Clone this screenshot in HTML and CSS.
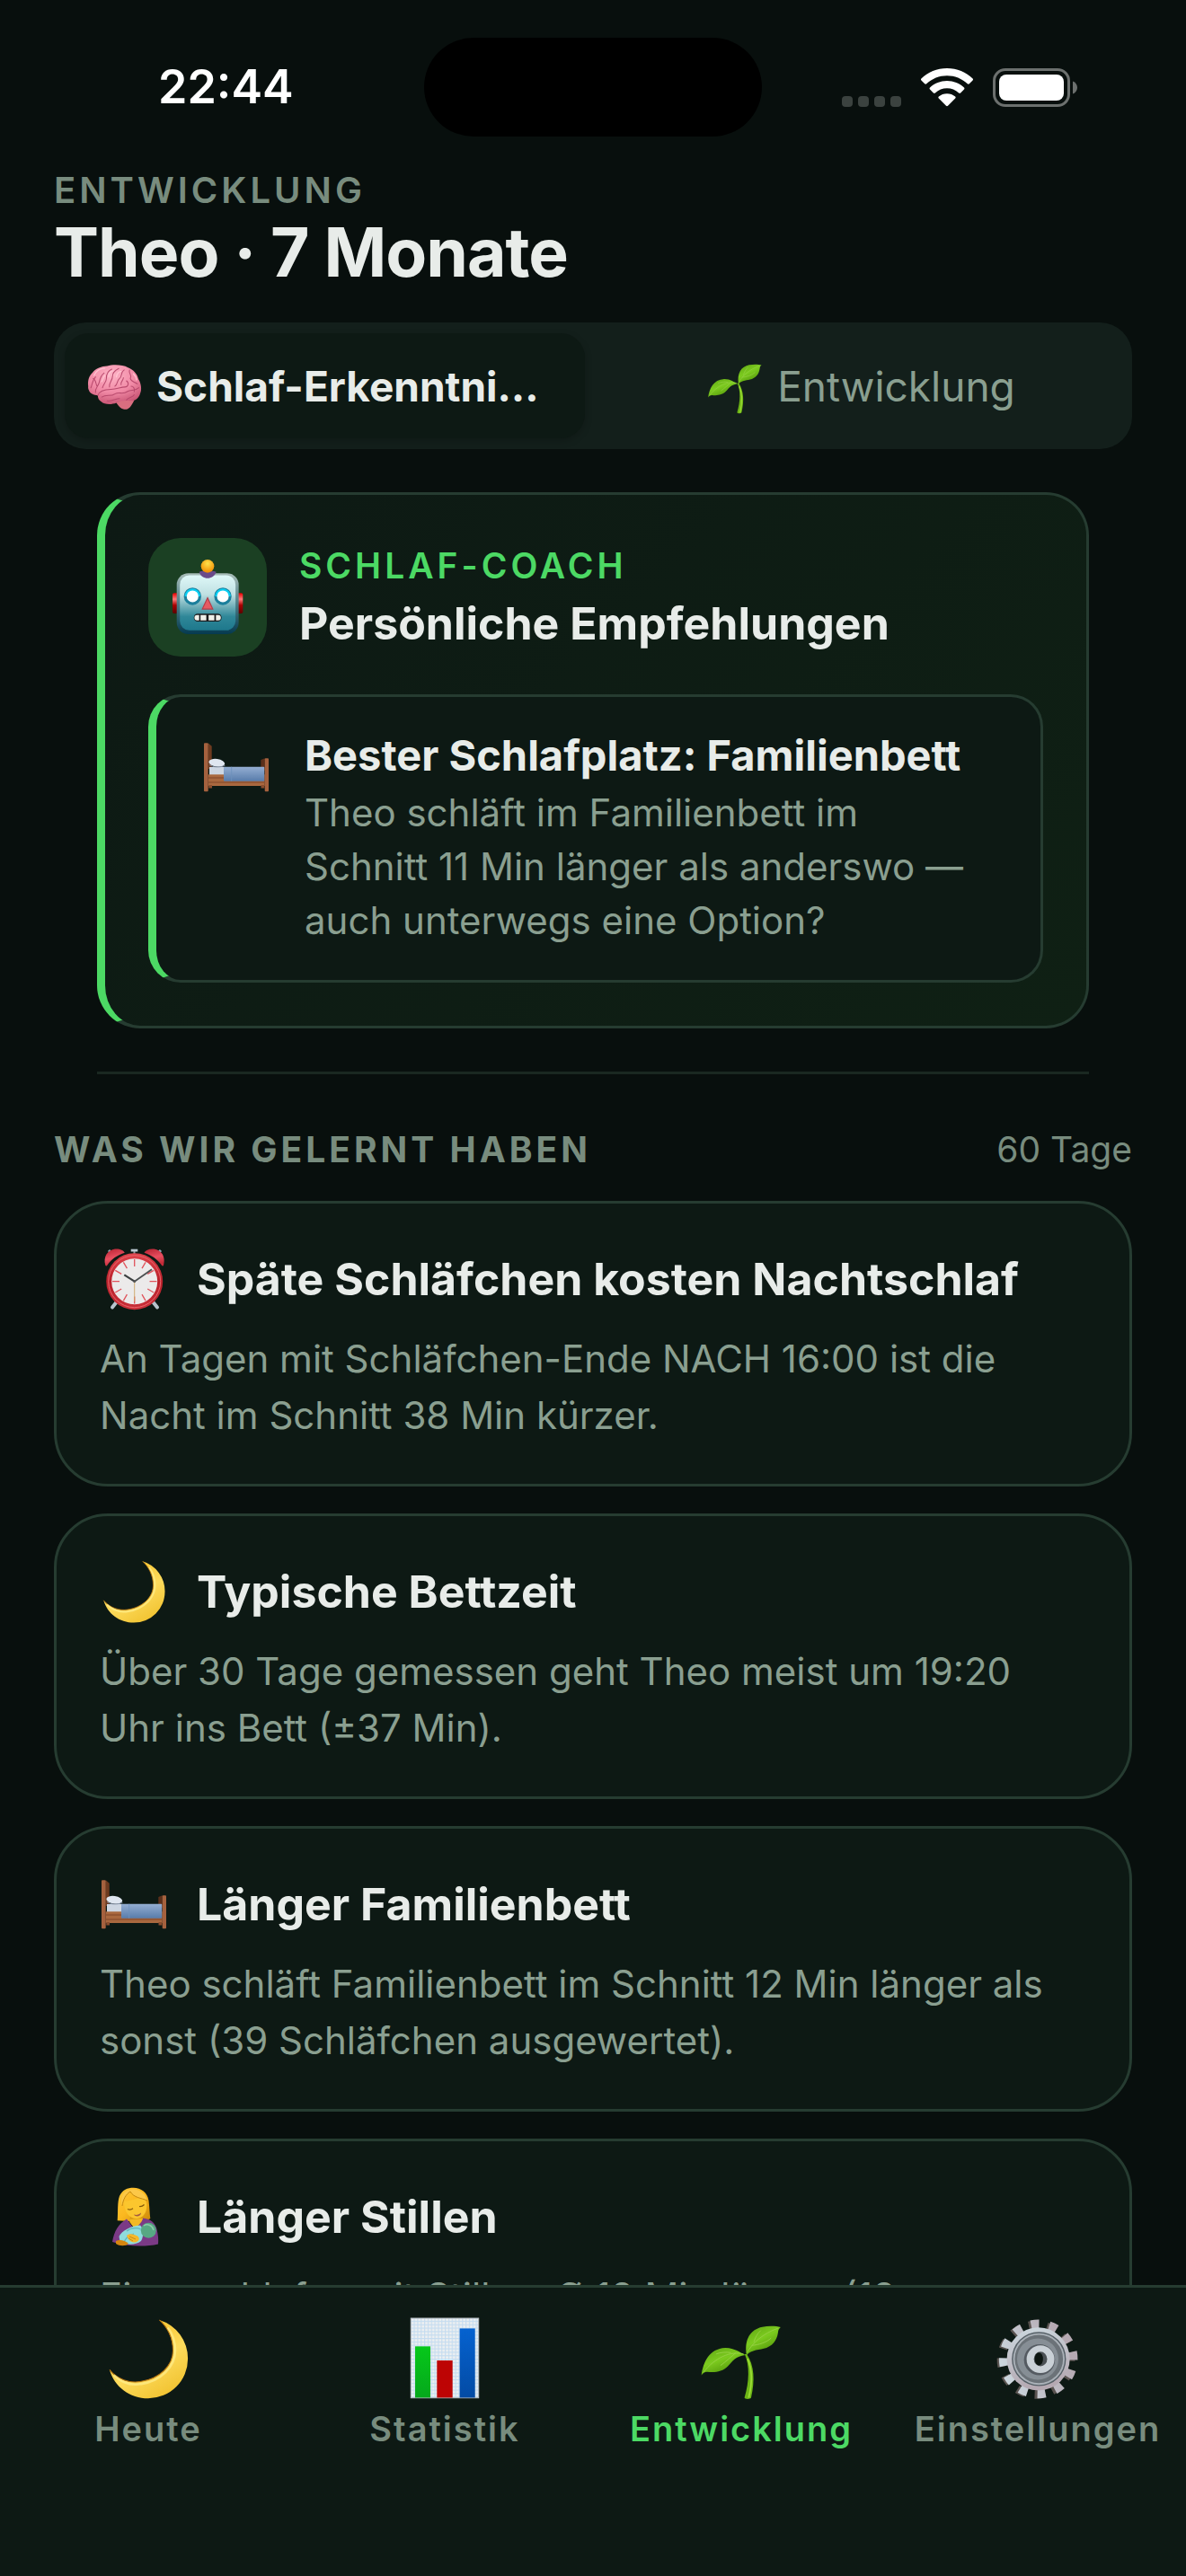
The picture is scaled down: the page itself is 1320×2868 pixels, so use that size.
FILE: index.html
```html
<!DOCTYPE html>
<html lang="de">
<head>
<meta charset="utf-8">
<meta name="viewport" content="width=device-width, initial-scale=1">
<title>Entwicklung</title>
<link rel="stylesheet" href="styles.css">
</head>
<body>
<svg class="sprite" aria-hidden="true">
  <defs>
    <linearGradient id="moonFill" x1="0.2" y1="0" x2="0.8" y2="1"><stop offset="0" stop-color="#f7bd1e"/><stop offset="0.55" stop-color="#fddb5c"/><stop offset="1" stop-color="#f0c02c"/></linearGradient>
    <linearGradient id="leafFill" x1="0" y1="0" x2="0.6" y2="1"><stop offset="0" stop-color="#5da312"/><stop offset="0.5" stop-color="#7ccb1f"/><stop offset="1" stop-color="#4f9208"/></linearGradient>
    <radialGradient id="brainFill" cx="0.45" cy="0.25" r="0.8"><stop offset="0" stop-color="#fdb3c5"/><stop offset="0.55" stop-color="#f18aa6"/><stop offset="1" stop-color="#c4506f"/></radialGradient>
    <linearGradient id="robotFill" x1="0" y1="0" x2="0" y2="1"><stop offset="0" stop-color="#dff8f8"/><stop offset="0.35" stop-color="#bfe0e2"/><stop offset="0.75" stop-color="#2f8798"/><stop offset="1" stop-color="#1e788c"/></linearGradient>
    <linearGradient id="robotEdge" x1="0" y1="0" x2="0" y2="1"><stop offset="0" stop-color="#a9bdb9"/><stop offset="0.5" stop-color="#4b7d86"/><stop offset="1" stop-color="#053a50"/></linearGradient>
    <radialGradient id="ballFill" cx="0.5" cy="0.3" r="0.7"><stop offset="0" stop-color="#ffe14a"/><stop offset="1" stop-color="#f28a00"/></radialGradient>
    <linearGradient id="earFill" x1="0" y1="0" x2="0" y2="1"><stop offset="0" stop-color="#e60000"/><stop offset="0.3" stop-color="#ff7a7a"/><stop offset="0.6" stop-color="#a80000"/><stop offset="1" stop-color="#5c0000"/></linearGradient>
    <linearGradient id="blanket" x1="0" y1="0" x2="0" y2="1"><stop offset="0" stop-color="#94aed2"/><stop offset="1" stop-color="#587cab"/></linearGradient>
    <linearGradient id="clockRim" x1="0" y1="0" x2="0" y2="1"><stop offset="0" stop-color="#e0444c"/><stop offset="0.5" stop-color="#b81f29"/><stop offset="1" stop-color="#c9303a"/></linearGradient>
    <linearGradient id="bellFill" x1="0" y1="0" x2="0.3" y2="1"><stop offset="0" stop-color="#b3202f"/><stop offset="0.6" stop-color="#e94f60"/><stop offset="1" stop-color="#c32b38"/></linearGradient>
    <linearGradient id="hairFill" x1="0" y1="0" x2="1" y2="1"><stop offset="0" stop-color="#ffc93a"/><stop offset="0.5" stop-color="#fbb81f"/><stop offset="1" stop-color="#c98608"/></linearGradient>
    <linearGradient id="gearFill" x1="0" y1="0" x2="0.2" y2="1"><stop offset="0" stop-color="#ccd8df"/><stop offset="1" stop-color="#b5a9b2"/></linearGradient>
    <linearGradient id="greenBar" x1="0" y1="0" x2="0" y2="1"><stop offset="0" stop-color="#06c81a"/><stop offset="1" stop-color="#05a81c"/></linearGradient>
    <linearGradient id="blueBar" x1="0" y1="0" x2="0" y2="1"><stop offset="0" stop-color="#0562d0"/><stop offset="1" stop-color="#034ba4"/></linearGradient>
    <pattern id="chartGrid" width="3" height="3" patternUnits="userSpaceOnUse"><rect width="3" height="3" fill="#eef0f1"/><path d="M0 0.5H3M0.5 0V3" stroke="#c5dcf0" stroke-width="0.9"/></pattern>
  </defs>

  <symbol id="moon" viewBox="0 0 72 72">
    <path d="M45.7 2.3A34.8 34.8 0 0 1 70.5 36 34.5 34.5 0 0 1 36 70.6C20 70.6 6.5 60.5 2.3 45.7 9 54 20 57.5 29 56 46 53.5 57.5 42 57.5 29 57.5 18 52.5 8.5 45.7 2.3Z" fill="url(#moonFill)"/>
    <path d="M2.3 45.7C9 54 20 57.5 29 56 46 53.5 57.5 42 57.5 29 57.5 18 52.5 8.5 45.7 2.3" fill="none" stroke="#b06f10" stroke-width="0.8"/>
    <path d="M6 50.5C14 58 23 59.4 30 58 47 55.5 59.5 43 59.5 29 59.5 21 57 14 53 9" fill="none" stroke="#ffef8e" stroke-width="2" opacity="0.7"/>
  </symbol>

  <symbol id="sprout" viewBox="0 0 72 72">
    <path d="M39 32C43.500 42 43 56 38.800 70 39.500 71.500 43.500 71.500 44.600 70 48 55 47.500 42 40.800 32Z" fill="#6db516"/>
    <path d="M41.500 36C45.500 45 45.500 58 42.500 70" fill="none" stroke="#9bdc35" stroke-width="1.400"/>
    <path d="M70.300 8.600C66.500 7.600 60 7.300 54.300 8.400 44 10.600 38.500 19 40.600 33 45 28 52 28.500 58 26.600 65.500 23.800 67.600 17.500 68.200 12 68.500 10 69.500 9.500 70.300 8.600Z" fill="url(#leafFill)"/>
    <path d="M1.300 50.400C3 39 8 27.500 22 26.700 30 26.500 35 31 39.600 32.800 31 34 28.500 38 24.500 42.500 19.500 48 12 48.200 6.500 47.500 4.500 47.300 2.500 48.500 1.300 50.400Z" fill="url(#leafFill)"/>
    <path d="M41 31C45 23 55 14 68 9.500M45 24.500C51 24 58 22 62 18M47 21.500C48 18 50 14 53 11.500M38 32C27 29 13 35 3 48M31 31C28 34 23 38 18 42M27 30.800C23 30 18 30.500 14 32" fill="none" stroke="#98d147" stroke-width="0.700"/>
  </symbol>

  <symbol id="brain" viewBox="0 0 72 72">
    <path d="M38 56C45 52 56 52 62 54 59.500 59 57 64.500 52 66 46 66.500 42.500 63 38 56Z" fill="#d96e80"/>
    <path d="M2.500 36C1.600 28 4 22 8 18.500 12 13 20 10 27 9.800 35 7.500 47 8 54 11.800 61 14.500 66 20 67.500 27 71 32 72 41 69.800 45 68 52 62.500 56 56 54.800 50 54 44 54.500 39 57.500 33 60 23 60 19.500 56 16 54 15 51.500 15 48 10 47.500 4 45 3.600 41.500 2.400 39.500 2.300 38 2.500 36Z" fill="url(#brainFill)"/>
    <path d="M6 38C8 33 8 28 12 24M12 44C11 38 16 36 17 30 18 25 19 22 23 19M21 38C22 33 26 31 26 26 26 20 28 16 33 14M30 37C29 31 34 29 34 23 34 18 38 15 42 13M37 36C41 34 39 29 43 26 47 23 44 18 49 15M15 48C17 41 26 40 32 40 40 40 44 37 50 37 54 37 56 32 52 29M20 50C26 46 32 50 37 46 42 43 48 47 53 43 58 40 63 43 68 38M56 15C54 20 60 21 57 26 58 31 63 30 66 33M45 34C44 30 48 29 48 25M52 54C54 50 60 51 62 47M27 55C33 56 38 52 43 52M9 26C13 28 12 33 14 36M58 36C61 36 63 39 62 43" fill="none" stroke="#b84a6d" stroke-width="1.200" stroke-linecap="round"/>
    <path d="M10 22C13 16 19 13 24 13M29 24C29 19 32 16 35 16M39 24C40 19 42 17 45 17M61 20C64 23 65 26 65 28M20 30C22 27 22 24 24 22" fill="none" stroke="#ffc4d2" stroke-width="1.500" stroke-linecap="round"/>
  </symbol>

  <symbol id="robot" viewBox="0 0 72 72">
    <rect x="2.600" y="32" width="6" height="19.400" rx="1.500" fill="url(#earFill)"/>
    <rect x="63.700" y="32" width="6" height="19.400" rx="1.500" fill="url(#earFill)"/>
    <rect x="6.600" y="13.100" width="59.100" height="58" rx="11" fill="url(#robotEdge)"/>
    <rect x="9.600" y="15" width="53.100" height="52.600" rx="9" fill="url(#robotFill)"/>
    <path d="M28 11.700C32 10.500 40 10.500 44.300 11.700 43 15.500 39.500 17.700 36 17.700S29 15.500 28 11.700Z" fill="#6a4b8a"/>
    <circle cx="36" cy="6.300" r="6.300" fill="url(#ballFill)"/>
    <circle cx="21.700" cy="35.100" r="8.300" fill="#1b7f9c"/><path d="M14.200 35.100a7.500 7.500 0 0 1 15 0z" fill="#0ccdf2"/><circle cx="21.700" cy="35.100" r="5.600" fill="#fff"/>
    <circle cx="50.600" cy="35.100" r="8.300" fill="#1b7f9c"/><path d="M43.100 35.100a7.500 7.500 0 0 1 15 0z" fill="#0ccdf2"/><circle cx="50.600" cy="35.100" r="5.600" fill="#fff"/>
    <path d="M36 36.500 41 47.200H31Z" fill="#e65a62" stroke="#b23c48" stroke-width="1"/>
    <rect x="22.900" y="51.700" width="26.500" height="7.400" rx="3.700" fill="#1a1a1c"/>
    <path d="M26 53H28V58H26A2.500 2.500 0 0 1 26 53ZM29.300 53H34.800V58H29.300ZM37 53H42.500V58H37ZM44 53H46.200A2.500 2.500 0 0 1 46.200 58H44Z" fill="#efefe9"/>
  </symbol>

  <symbol id="bed" viewBox="0 0 72 72">
    <path d="M4.700 9.300 8.700 12.700V38H4.700Z" fill="#6e3b20"/>
    <path d="M63.300 28 67.700 26.300V40H63.300Z" fill="#5c2f1a"/>
    <rect x="6" y="36" width="18" height="9" fill="#cdd6e2"/>
    <ellipse cx="14.300" cy="31.300" rx="9" ry="4.300" transform="rotate(8 14.300 31.300)" fill="#dfe6f0"/>
    <path d="M6 33.500C10 36.500 18 36.500 23.300 34.500" fill="none" stroke="#8794a8" stroke-width="1"/>
    <rect x="4.700" y="44.300" width="63" height="12.700" fill="#a9683f"/>
    <path d="M5 48H22M5 53H67" stroke="#80462a" stroke-width="1"/>
    <path d="M5.300 56H9V59.500H5.300ZM63.500 56H67.300V59.500H63.500Z" fill="#8a4d2e"/>
    <rect x="22" y="35.700" width="45.300" height="16" rx="1" fill="url(#blanket)"/>
    <path d="M30.700 35.700V51.700" stroke="#6d90bd" stroke-width="0.800"/>
    <rect x="0" y="9.300" width="4.700" height="54" rx="1" fill="#a5613e"/>
    <rect x="67.700" y="26.300" width="4.300" height="37" rx="1" fill="#a5613e"/>
  </symbol>

  <symbol id="clock" viewBox="0 0 72 72">
    <path d="M36.500 5V10" stroke="#8b949b" stroke-width="2"/>
    <rect x="32.700" y="2.700" width="7.600" height="2.800" fill="#b9c8d0"/>
    <path d="M12 67.500 18 60M62 67.500 56 60" stroke="#b7c3cd" stroke-width="4" stroke-linecap="round"/>
    <path d="M8 4 11 7M66 4 63 7" stroke="#8fa5b5" stroke-width="3"/>
    <path d="M4.300 20.800C1.500 11 7 3.500 15 2.500 20 2 24.500 4 25.800 6.700 18 9 10.500 14 6.500 20.500 6 21.500 4.800 21.800 4.300 20.800Z" fill="url(#bellFill)"/>
    <path d="M69 20.800C71.800 11 66.500 3.500 58.500 2.500 53 2 49 4 47.500 6.700 55 9 62.500 14 66.800 20.500 67.500 21.500 68.500 21.800 69 20.800Z" fill="url(#bellFill)"/>
    <circle cx="36.700" cy="38.700" r="31.500" fill="url(#clockRim)"/>
    <circle cx="36.700" cy="38.700" r="29" fill="none" stroke="#e8656c" stroke-width="1"/>
    <circle cx="36.700" cy="38.700" r="25.500" fill="#eceaea"/>
    <g stroke="#e0535c" stroke-width="1.300"><path d="M36.700 14V22M36.700 55.500V63.500M12 38.700H20M53.500 38.700H61.500M24.400 17.300 28.400 24.200M49 17.300 45 24.200M24.400 60.100 28.400 53.200M49 60.100 45 53.200M15.300 26.400 22.200 30.400M58.100 26.400 51.200 30.400M15.300 51 22.200 47M58.100 51 51.200 47"/></g>
    <path d="M36.700 38.700V61" stroke="#cda765" stroke-width="0.900"/>
    <path d="M36.700 38.700 25.300 31.300" stroke="#3b3f40" stroke-width="2.200"/>
    <path d="M36.700 38.700 56 25.300" stroke="#4b4f50" stroke-width="1.800"/>
    <circle cx="36.700" cy="38.700" r="1.400" fill="#555"/>
  </symbol>

  <symbol id="nursing" viewBox="0 0 72 72">
    <path d="M17.700 40.300C18.500 30 17.500 20 20 13 23 6 29 3.700 35.500 3.700 44 3.700 51 9 52.500 18 53.500 26 53.500 32 54.300 38 50 41 45 41.500 40 41.500Z" fill="url(#hairFill)"/>
    <path d="M33 31H44V42L38 49 31 42Z" fill="#d99b12"/>
    <path d="M12 64C14 52 19 44 28 38.500 31 42 33 46 36 49 41 45 45 41 46 37.500 54 38 60 43 61.500 50 63 56 63.500 62 63 66.500 48 70 27 69 12 64Z" fill="#7b3a86"/>
    <path d="M31 39 46 38C45 42 40 47 37 49 34 46 32 43 31 39Z" fill="#f3b925"/>
    <path d="M25 19C32 18.500 39 15.500 45 14.500 50 16.500 51 22 50 27 49 34 44 38 39 38 31 38 25 31 25 19Z" fill="#fbc62e"/>
    <path d="M23 24C24 17 27 11 32 8 36 15 44 15 51 18 48 7 37 3 29 7 22 10 21 18 23 24Z" fill="#fcc848"/>
    <path d="M23 24C24 17 27 11 32 8 36 15 44 15 51 18" fill="none" stroke="#c58a12" stroke-width="1"/>
    <path d="M29 27.500C31 28.500 33.500 28 35 26.800M42 24.500C44 24.800 46 24 47.500 22.500" fill="none" stroke="#805509" stroke-width="1.200"/>
    <path d="M36 33.500C39 34.500 42 33.500 44 31.500 44 35.500 38 37 36 33.500Z" fill="#a35b42"/>
    <path d="M19.500 58C22 52 33 46 43 45.500 47 49 47 58 44 63 38 68 27 68 20.500 63.500Z" fill="#8fdcdd"/>
    <path d="M28 52C33 48 39 48 44 50M25 65C26 61 30 57 36 55" fill="none" stroke="#62b4bc" stroke-width="1.200"/>
    <circle cx="52.300" cy="51.300" r="8.500" fill="#57a883"/>
    <path d="M47 46C51 43 57 46 58 51" fill="none" stroke="#8bcba9" stroke-width="1.500"/>
    <path d="M28 57C31 54 36 55 40 57.500 43 60 42 63 38 64.500 33 65 30 62 28 57Z" fill="#f5b82b"/>
    <path d="M16 63C20 61 26 62 30 66 27 69 20 69 16 66Z" fill="#d5860f"/>
    <path d="M31 58 38 61M30 60 35 63" stroke="#bf7f10" stroke-width="0.800"/>
  </symbol>

  <symbol id="chart" viewBox="0 0 72 72">
    <rect x="6.500" y="0.800" width="59" height="69.400" fill="url(#chartGrid)" stroke="#b9bfc4" stroke-width="0.800"/>
    <rect x="10.200" y="25.300" width="13.300" height="44.700" fill="url(#greenBar)"/>
    <rect x="29.200" y="37.600" width="13.600" height="32.400" fill="#bd0404"/>
    <rect x="49" y="9.700" width="13.400" height="60.300" fill="url(#blueBar)"/>
  </symbol>

  <symbol id="gear" viewBox="0 0 72 72">
    <circle cx="34.500" cy="37" r="30.300" fill="none" stroke="#5a5350" stroke-width="7.400" stroke-dasharray="7.400 8.464" transform="rotate(-102 34.500 37)"/>
    <circle cx="36.500" cy="36.300" r="30.300" fill="none" stroke="url(#gearFill)" stroke-width="8" stroke-dasharray="7 8.864" transform="rotate(-102 36.500 36.300)"/>
    <circle cx="36.500" cy="36.300" r="27.400" fill="url(#gearFill)"/>
    <circle cx="37" cy="36.300" r="23.600" fill="#555f66"/>
    <circle cx="37" cy="36.300" r="22.500" fill="#a9b0b7"/>
    <circle cx="37" cy="36.300" r="21" fill="#6b7278"/>
    <circle cx="36" cy="36.300" r="18" fill="#868e95"/>
    <circle cx="37.500" cy="37" r="13.500" fill="#555b62"/>
    <circle cx="38.400" cy="36.500" r="12.100" fill="#c9d0d6"/>
    <ellipse cx="38.400" cy="36.300" rx="5.800" ry="6.300" fill="#4a5054"/>
    <ellipse cx="37" cy="36.300" rx="3.600" ry="5.600" fill="#0c1511"/>
  </symbol>
</svg>

<div class="app">
  <header class="status">
    <time class="status-time">22:44</time>
    <div class="island"></div>
    <div class="status-icons">
      <svg class="signal" viewBox="0 0 66 12" aria-hidden="true"><rect width="12" height="12" rx="4"/><rect x="18" width="12" height="12" rx="4"/><rect x="36" width="12" height="12" rx="4"/><rect x="54" width="12" height="12" rx="4"/></svg>
      <svg class="wifi" viewBox="0 0 58 43" aria-hidden="true">
        <path d="M29 0C40 0 50.500 4.300 57.600 11.500 58.200 12.100 58.200 12.900 57.600 13.500L53.800 17.300C53.200 17.900 52.400 17.900 51.800 17.300 45.700 11.400 37.500 8.200 29 8.200S12.300 11.400 6.200 17.300C5.600 17.900 4.800 17.900 4.200 17.300L0.400 13.500C-0.200 12.900-0.200 12.100 0.400 11.500 7.500 4.300 18 0 29 0Z"/>
        <path d="M29 14C36.300 14 43 16.800 48 21.500 48.600 22.100 48.600 22.900 48 23.500L44.100 27.400C43.500 28 42.700 28 42.100 27.400 38.500 24.100 33.900 22.200 29 22.200S19.500 24.100 15.900 27.400C15.300 28 14.500 28 13.900 27.400L10 23.500C9.400 22.900 9.400 22.100 10 21.500 15 16.800 21.700 14 29 14Z"/>
        <path d="M29 28.200C32.500 28.200 35.700 29.400 38.200 31.500 38.800 32.100 38.800 32.900 38.200 33.500L30 41.800C29.400 42.400 28.600 42.400 28 41.800L19.800 33.500C19.200 32.900 19.200 32.100 19.800 31.500 22.300 29.400 25.500 28.200 29 28.200Z"/>
      </svg>
      <svg class="battery" viewBox="0 0 94 43" aria-hidden="true"><rect class="battery-shell" x="1.500" y="1.500" width="83" height="40" rx="12.500"/><rect x="7" y="7" width="72" height="29" rx="8"/><path class="battery-cap" d="M89 14.500C92 15.500 94 18.300 94 21.500S92 27.500 89 28.500Z"/></svg>
    </div>
  </header>

  <main class="content">
    <div class="page-head">
      <p class="eyebrow">ENTWICKLUNG</p>
      <h1>Theo · 7 Monate</h1>
    </div>

    <div class="segmented" role="tablist">
      <button class="segment segment-active" type="button" role="tab" aria-selected="true"><svg class="segment-icon" aria-hidden="true"><use href="#brain"/></svg>Schlaf-Erkenntni…</button>
      <button class="segment" type="button" role="tab" aria-selected="false"><svg class="segment-icon" aria-hidden="true"><use href="#sprout"/></svg>Entwicklung</button>
    </div>

    <section class="coach">
      <div class="coach-head">
        <div class="coach-tile"><svg class="coach-icon" aria-hidden="true"><use href="#robot"/></svg></div>
        <div class="coach-titles">
          <p class="coach-label">SCHLAF-COACH</p>
          <h2 class="card-title">Persönliche Empfehlungen</h2>
        </div>
      </div>
      <article class="tip">
        <svg class="card-icon" aria-hidden="true"><use href="#bed"/></svg>
        <div class="tip-text">
          <h3>Bester Schlafplatz: Familienbett</h3>
          <p>Theo schläft im Familienbett im Schnitt 11 Min länger als anderswo — auch unterwegs eine Option?</p>
        </div>
      </article>
    </section>

    <hr class="divider">

    <div class="section-head">
      <h2 class="section-title">WAS WIR GELERNT HABEN</h2>
      <span class="section-range">60 Tage</span>
    </div>

    <div class="cards">
      <article class="card">
        <div class="card-head"><svg class="card-icon" aria-hidden="true"><use href="#clock"/></svg><h3 class="card-title">Späte Schläfchen kosten Nachtschlaf</h3></div>
        <p>An Tagen mit Schläfchen-Ende NACH 16:00 ist die Nacht im Schnitt 38 Min kürzer.</p>
      </article>
      <article class="card">
        <div class="card-head"><svg class="card-icon" aria-hidden="true"><use href="#moon"/></svg><h3 class="card-title">Typische Bettzeit</h3></div>
        <p>Über 30 Tage gemessen geht Theo meist um 19:20 Uhr ins Bett (±37 Min).</p>
      </article>
      <article class="card">
        <div class="card-head"><svg class="card-icon" aria-hidden="true"><use href="#bed"/></svg><h3 class="card-title">Länger Familienbett</h3></div>
        <p>Theo schläft Familienbett im Schnitt 12 Min länger als sonst (39 Schläfchen ausgewertet).</p>
      </article>
      <article class="card">
        <div class="card-head"><svg class="card-icon" aria-hidden="true"><use href="#nursing"/></svg><h3 class="card-title">Länger Stillen</h3></div>
        <p>Eingeschlafen mit Stillen: Ø 18 Min länger (18 Schläfchen ausgewertet).</p>
      </article>
    </div>
  </main>

  <nav class="tabbar">
    <a class="tab" href="#heute"><svg class="tab-icon" aria-hidden="true"><use href="#moon"/></svg>Heute</a>
    <a class="tab" href="#statistik"><svg class="tab-icon" aria-hidden="true"><use href="#chart"/></svg>Statistik</a>
    <a class="tab tab-active" href="#entwicklung" aria-current="page"><svg class="tab-icon" aria-hidden="true"><use href="#sprout"/></svg>Entwicklung</a>
    <a class="tab" href="#einstellungen"><svg class="tab-icon" aria-hidden="true"><use href="#gear"/></svg>Einstellungen</a>
  </nav>
</div>
</body>
</html>
```

FILE: styles.css
```css
:root {
  --bg: #080f0d;
  --card: #0d1914;
  --line: #263c31;
  --text: #e8ece9;
  --body: #8a9f90;
  --muted: #788c7e;
  --green: #4cd964;
}

* {
  box-sizing: border-box;
}

body,
h1,
h2,
h3,
p {
  margin: 0;
}

body {
  background: var(--bg);
  color: var(--text);
  font-family: Inter, "Liberation Sans", sans-serif;
  font-size: 42px;
}

.sprite {
  position: absolute;
  width: 0;
  height: 0;
}

.app {
  display: flex;
  flex-direction: column;
  height: 100vh;
}

/* Status bar */
.status {
  display: grid;
  grid-template-columns: 1fr 376px 1fr;
  align-items: center;
  padding-top: 42px;
}

.status-time {
  padding-left: 176px;
  color: #fff;
  font-size: 52px;
  line-height: 60px;
  font-weight: 600;
}

.island {
  height: 110px;
  border-radius: 55px;
  background: #000;
}

.status-icons {
  display: flex;
  justify-content: flex-end;
  align-items: flex-end;
  gap: 22px;
  padding-right: 121px;
  fill: #fff;
}

.signal {
  width: 66px;
  height: 12px;
  fill: #3b423f;
}

.wifi {
  width: 58px;
  height: 43px;
}

.battery {
  width: 94px;
  height: 43px;
}

.battery-shell {
  fill: none;
  stroke: #6c706e;
  stroke-width: 3;
}

.battery-cap {
  fill: #6c706e;
}

/* Scrolling content */
.content {
  flex: 1;
  min-height: 0;
  overflow-y: auto;
  scrollbar-width: none;
  padding: 36px 60px 0;
}

.eyebrow {
  color: var(--muted);
  font-size: 40px;
  line-height: 48px;
  font-weight: 600;
  letter-spacing: 4px;
}

h1 {
  font-size: 75px;
  line-height: 90px;
  font-weight: 700;
  letter-spacing: -1px;
}

.segmented {
  display: grid;
  grid-template-columns: 1fr 1fr;
  gap: 18px;
  margin-top: 33px;
  padding: 12px;
  border-radius: 36px;
  background: #131f1b;
}

.segment {
  display: flex;
  align-items: center;
  justify-content: center;
  gap: 16px;
  height: 117px;
  padding: 0 24px;
  border: 0;
  border-radius: 27px;
  background: none;
  color: var(--body);
  font-family: inherit;
  font-size: 46px;
  font-weight: 400;
  white-space: nowrap;
}

.segment-active {
  justify-content: flex-start;
  background: var(--card);
  color: var(--text);
  font-weight: 700;
  box-shadow: 0 3px 9px rgba(0, 0, 0, 0.2);
}

.segment-icon {
  flex: none;
  width: 62px;
  height: 62px;
}

/* Coach */
.coach {
  display: flex;
  flex-direction: column;
  gap: 42px;
  margin: 48px;
  padding: 48px;
  border: 3px solid var(--line);
  border-left: 9px solid var(--green);
  border-radius: 48px;
  background: linear-gradient(135deg, #0d1914, #0f2014);
}

.coach-head {
  display: flex;
  align-items: center;
  gap: 36px;
}

.coach-tile {
  display: grid;
  place-items: center;
  width: 132px;
  height: 132px;
  border-radius: 36px;
  background: #1b4023;
}

.coach-icon {
  width: 84px;
  height: 84px;
}

.coach-titles {
  display: grid;
  gap: 6px;
}

.coach-label {
  color: var(--green);
  font-size: 39px;
  line-height: 51px;
  font-weight: 600;
  letter-spacing: 4px;
}

.card-title {
  font-size: 50px;
  line-height: 66px;
  font-weight: 650;
}

.tip {
  display: flex;
  align-items: flex-start;
  gap: 38px;
  padding: 36px 66px 36px 51px;
  border: 3px solid var(--line);
  border-left: 9px solid var(--green);
  border-radius: 36px;
  background: var(--card);
}

.tip .card-icon {
  margin-top: 6px;
}

.tip-text {
  display: grid;
  gap: 6px;
}

.tip h3 {
  font-size: 47px;
  line-height: 57px;
  font-weight: 700;
}

.tip p {
  color: var(--body);
  line-height: 60px;
}

.divider {
  height: 3px;
  margin: 0 48px;
  border: 0;
  background: #1a2821;
}

/* Findings */
.section-head {
  display: flex;
  justify-content: space-between;
  margin-top: 60px;
  color: var(--muted);
  line-height: 48px;
}

.section-title {
  font-size: 39px;
  line-height: 48px;
  font-weight: 700;
  letter-spacing: 4px;
}

.section-range {
  font-size: 39px;
}

.cards {
  display: grid;
  gap: 30px;
  margin-top: 33px;
}

.card {
  display: grid;
  gap: 21px;
  padding: 48px 57px 45px 48px;
  border: 3px solid var(--line);
  border-radius: 60px;
  background: var(--card);
}

.card-head {
  display: flex;
  align-items: center;
  gap: 32px;
}

.card-icon {
  flex: none;
  width: 76px;
  height: 72px;
}

.card p {
  color: var(--body);
  line-height: 63px;
}

/* Tab bar */
.tabbar {
  display: grid;
  grid-template-columns: repeat(4, minmax(0, 1fr));
  flex: none;
  padding: 33px 0 140px;
  border-top: 3px solid var(--line);
  background: var(--card);
}

.tab {
  display: flex;
  flex-direction: column;
  align-items: center;
  gap: 8px;
  color: var(--muted);
  font-size: 38px;
  line-height: 48px;
  font-weight: 600;
  letter-spacing: 2px;
  text-decoration: none;
}

.tab-active {
  color: var(--green);
}

.tab-icon {
  width: 92px;
  height: 92px;
}
```
